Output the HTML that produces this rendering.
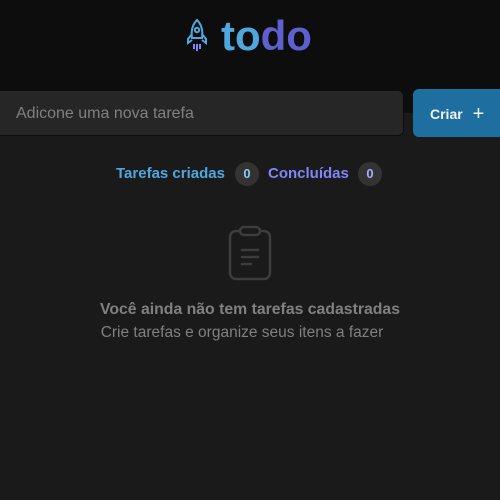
<!DOCTYPE html><html><head><style>
body{margin:0;width:500px;height:500px;background:#1a1a1a;font-family:"Liberation Sans",sans-serif;overflow:hidden;position:relative}
.hdr{position:absolute;left:0;top:0;width:500px;height:113px;background:#0d0d0d}
.logo{position:absolute;left:221px;top:12px;font-size:42px;font-weight:bold;letter-spacing:0px}
.inp{position:absolute;left:-6px;top:90px;width:410px;height:46px;background:#262626;border-radius:6px;border:1px solid #0d0d0d;box-sizing:border-box;color:#808080;font-size:16px;line-height:46px;padding-left:21px}
.btn{position:absolute;left:413px;top:89px;width:95px;height:48px;background:#1e6f9f;border-radius:6px;color:#f2f2f2;font-weight:bold;font-size:14px;line-height:48px;padding-left:17px;box-sizing:border-box}
.cnt{position:absolute;top:165px;font-size:15px;font-weight:bold}
.badge{position:absolute;top:162px;width:24px;height:24px;border-radius:12px;background:#333;font-size:13px;font-weight:bold;text-align:center;line-height:24px}
</style></head><body>
<div class="hdr"></div>
<svg style="position:absolute;left:186px;top:18px" width="22" height="38" viewBox="0 0 22 38" fill="none" stroke="#4ea8de" stroke-width="2"><path d="M11 2C6 7 5 13 6 20H16C17 13 16 7 11 2Z"/><circle cx="11" cy="12" r="2.2"/><path d="M6 16L2 21V25L6 22M16 16L20 21V25L16 22"/><path d="M8 26V31M11 26V33M14 26V31" stroke="#8284fa"/></svg>
<div class="logo"><span style="color:#4ea8de">to</span><span style="color:#5e60ce">do</span></div>
<div class="inp">Adicone uma nova tarefa</div>
<div class="btn">Criar <span style="font-weight:normal;font-size:20px;margin-left:6px;position:relative;top:1px">+</span></div>
<div class="cnt" style="left:116px;color:#4ea8de">Tarefas criadas</div>
<div class="badge" style="left:235px;color:#8fc8ec">0</div>
<div class="cnt" style="left:268px;color:#8284fa">Concluídas</div>
<div class="badge" style="left:358px;color:#a9abff">0</div>
<svg style="position:absolute;left:228px;top:224px" width="44" height="58" viewBox="0 0 44 58" fill="none" stroke="#3d3d3d" stroke-width="2.5" stroke-linecap="round"><rect x="12" y="3" width="20" height="8" rx="4"/><path d="M10 7H8a6 6 0 0 0-6 6V49a6 6 0 0 0 6 6H36a6 6 0 0 0 6-6V13a6 6 0 0 0-6-6H34"/><path d="M14 26H30M14 33H30M14 40H23"/></svg>
<div style="position:absolute;top:301px;width:500px;text-align:center;color:#808080;font-size:15.8px;font-weight:bold">Você ainda não tem tarefas cadastradas</div>
<div style="position:absolute;top:324px;width:484px;text-align:center;color:#808080;font-size:15.5px">Crie tarefas e organize seus itens a fazer</div>
</body></html>
